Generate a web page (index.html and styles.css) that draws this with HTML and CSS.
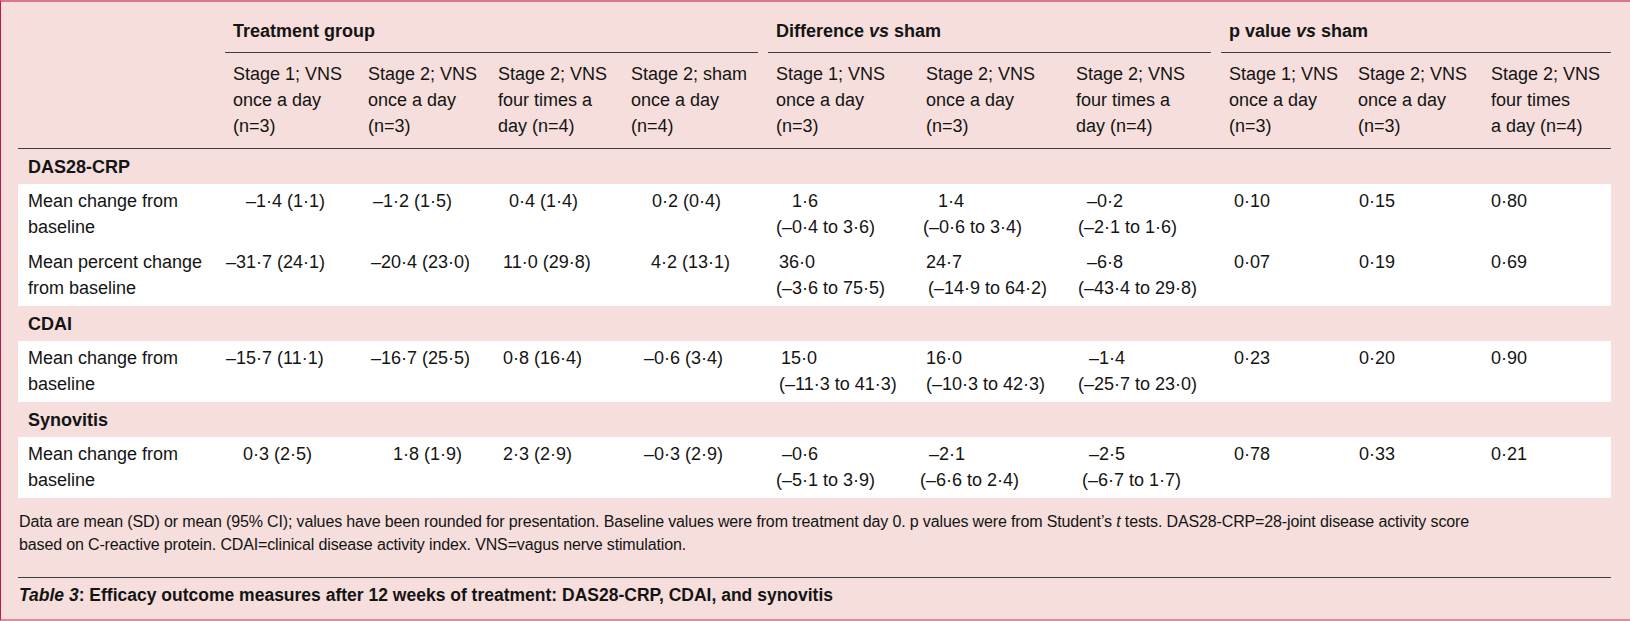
FILE: index.html
```html
<!DOCTYPE html>
<html lang="en">
<head>
<meta charset="utf-8">
<title>Table 3</title>
<link rel="stylesheet" href="styles.css">
</head>
<body>
<div class="frame">
  <table class="tbl">
    <colgroup>
      <col class="c-label"><col class="c2"><col class="c3"><col class="c4"><col class="c5"><col class="c6"><col class="c7"><col class="c8"><col class="c9"><col class="c10"><col class="c11">
    </colgroup>
    <thead>
      <tr class="groups">
        <th></th>
        <th colspan="4"><div class="grp gap">Treatment group</div></th>
        <th colspan="3"><div class="grp gap">Difference <i>vs</i> sham</div></th>
        <th colspan="3"><div class="grp">p value <i>vs</i> sham</div></th>
      </tr>
      <tr class="cols">
        <th></th>
        <th>Stage 1; VNS<br>once a day<br>(n=3)</th>
        <th>Stage 2; VNS<br>once a day<br>(n=3)</th>
        <th>Stage 2; VNS<br>four times a<br>day (n=4)</th>
        <th>Stage 2; sham<br>once a day<br>(n=4)</th>
        <th>Stage 1; VNS<br>once a day<br>(n=3)</th>
        <th>Stage 2; VNS<br>once a day<br>(n=3)</th>
        <th>Stage 2; VNS<br>four times a<br>day (n=4)</th>
        <th>Stage 1; VNS<br>once a day<br>(n=3)</th>
        <th>Stage 2; VNS<br>once a day<br>(n=3)</th>
        <th>Stage 2; VNS<br>four times<br>a day (n=4)</th>
      </tr>
    </thead>
    <tbody>
      <tr class="section"><td colspan="11">DAS28-CRP</td></tr>
      <tr class="data">
        <td class="label">Mean change from<br>baseline</td>
        <td><span class="l i21">–1·4 (1·1)</span></td>
        <td><span class="l i13">–1·2 (1·5)</span></td>
        <td><span class="l i19">0·4 (1·4)</span></td>
        <td><span class="l i29">0·2 (0·4)</span></td>
        <td><span class="l i24">1·6</span><span class="l i8">(–0·4 to 3·6)</span></td>
        <td><span class="l i20">1·4</span><span class="l i5">(–0·6 to 3·4)</span></td>
        <td><span class="l i19">–0·2</span><span class="l i10">(–2·1 to 1·6)</span></td>
        <td><span class="l i13">0·10</span></td>
        <td><span class="l i9">0·15</span></td>
        <td><span class="l i8">0·80</span></td>
      </tr>
      <tr class="data">
        <td class="label">Mean percent change<br>from baseline</td>
        <td><span class="l i1">–31·7 (24·1)</span></td>
        <td><span class="l i11">–20·4 (23·0)</span></td>
        <td><span class="l i13">11·0 (29·8)</span></td>
        <td><span class="l i28">4·2 (13·1)</span></td>
        <td><span class="l i11">36·0</span><span class="l i8">(–3·6 to 75·5)</span></td>
        <td><span class="l i8">24·7</span><span class="l i10">(–14·9 to 64·2)</span></td>
        <td><span class="l i19">–6·8</span><span class="l i10">(–43·4 to 29·8)</span></td>
        <td><span class="l i13">0·07</span></td>
        <td><span class="l i9">0·19</span></td>
        <td><span class="l i8">0·69</span></td>
      </tr>
      <tr class="section"><td colspan="11">CDAI</td></tr>
      <tr class="data">
        <td class="label">Mean change from<br>baseline</td>
        <td><span class="l i1">–15·7 (11·1)</span></td>
        <td><span class="l i11">–16·7 (25·5)</span></td>
        <td><span class="l i13">0·8 (16·4)</span></td>
        <td><span class="l i21">–0·6 (3·4)</span></td>
        <td><span class="l i13">15·0</span><span class="l i11">(–11·3 to 41·3)</span></td>
        <td><span class="l i8">16·0</span><span class="l i8">(–10·3 to 42·3)</span></td>
        <td><span class="l i21">–1·4</span><span class="l i10">(–25·7 to 23·0)</span></td>
        <td><span class="l i13">0·23</span></td>
        <td><span class="l i9">0·20</span></td>
        <td><span class="l i8">0·90</span></td>
      </tr>
      <tr class="section"><td colspan="11">Synovitis</td></tr>
      <tr class="data">
        <td class="label">Mean change from<br>baseline</td>
        <td><span class="l i18">0·3 (2·5)</span></td>
        <td><span class="l i33">1·8 (1·9)</span></td>
        <td><span class="l i13">2·3 (2·9)</span></td>
        <td><span class="l i21">–0·3 (2·9)</span></td>
        <td><span class="l i14">–0·6</span><span class="l i8">(–5·1 to 3·9)</span></td>
        <td><span class="l i11">–2·1</span><span class="l i2">(–6·6 to 2·4)</span></td>
        <td><span class="l i21">–2·5</span><span class="l i14">(–6·7 to 1·7)</span></td>
        <td><span class="l i13">0·78</span></td>
        <td><span class="l i9">0·33</span></td>
        <td><span class="l i8">0·21</span></td>
      </tr>
    </tbody>
  </table>
  <p class="note">Data are mean (SD) or mean (95% CI); values have been rounded for presentation. Baseline values were from treatment day 0. p values were from Student’s <i>t</i> tests. DAS28-CRP=28-joint disease activity score<br>based on C-reactive protein. CDAI=clinical disease activity index. VNS=vagus nerve stimulation.</p>
  <p class="caption"><i>Table 3</i>: Efficacy outcome measures after 12 weeks of treatment: DAS28-CRP, CDAI, and synovitis</p>
</div>
</body>
</html>
```
FILE: styles.css
```css
* { box-sizing: border-box; }
html, body { margin: 0; padding: 0; }
body {
  background: #f5dedb;
  font-family: "Liberation Sans", Arial, sans-serif;
  color: #141414;
}
.frame {
  width: 1630px;
  height: 621px;
  background: #f5dedb;
  border-top: 2px solid #d9758d;
  border-left: 1px solid #c8173f;
  border-bottom: 2px solid #dc8c9c;
  padding: 0 0 0 17px;
}
.tbl {
  width: 1593px;
  table-layout: fixed;
  border-collapse: collapse;
  border-spacing: 0;
  font-size: 18px;
  line-height: 26px;
}
.c-label { width: 207px; }
.c2 { width: 135px; }
.c3 { width: 130px; }
.c4 { width: 133px; }
.c5 { width: 145px; }
.c6 { width: 150px; }
.c7 { width: 150px; }
.c8 { width: 153px; }
.c9 { width: 129px; }
.c10 { width: 133px; }
.c11 { width: 128px; }

.tbl th, .tbl td {
  padding: 0;
  text-align: left;
  vertical-align: top;
}
.groups th { font-weight: bold; }
.grp {
  padding: 16px 0 8px 8px;
  border-bottom: 1px solid #3e3e3e;
  white-space: nowrap;
}
.grp.gap { margin-right: 10px; }
.cols th {
  font-weight: normal;
  padding: 8px 0 9px 8px;
  border-bottom: 1px solid #3e3e3e;
  white-space: nowrap;
}
.section td {
  font-weight: bold;
  padding: 5px 0 4px 10px;
}
.data { background: #ffffff; }
.data td {
  padding: 4px 0 5px 0;
  white-space: nowrap;
}
.data td.label { padding-left: 10px; }
.l { display: block; }
.i1 { padding-left: 1px; }
.i2 { padding-left: 2px; }
.i5 { padding-left: 5px; }
.i8 { padding-left: 8px; }
.i9 { padding-left: 9px; }
.i10 { padding-left: 10px; }
.i11 { padding-left: 11px; }
.i13 { padding-left: 13px; }
.i14 { padding-left: 14px; }
.i18 { padding-left: 18px; }
.i19 { padding-left: 19px; }
.i20 { padding-left: 20px; }
.i21 { padding-left: 21px; }
.i24 { padding-left: 24px; }
.i28 { padding-left: 28px; }
.i29 { padding-left: 29px; }
.i33 { padding-left: 33px; }

.note {
  margin: 12px 0 0 1px;
  font-size: 16px;
  line-height: 23px;
  letter-spacing: -0.14px;
  white-space: nowrap;
}
.caption {
  width: 1593px;
  margin: 21px 0 0 0;
  border-top: 1px solid #3e3e3e;
  padding: 6px 0 0 1px;
  font-size: 17.5px;
  line-height: 22px;
  font-weight: bold;
}
.caption i { font-weight: bold; }
```
